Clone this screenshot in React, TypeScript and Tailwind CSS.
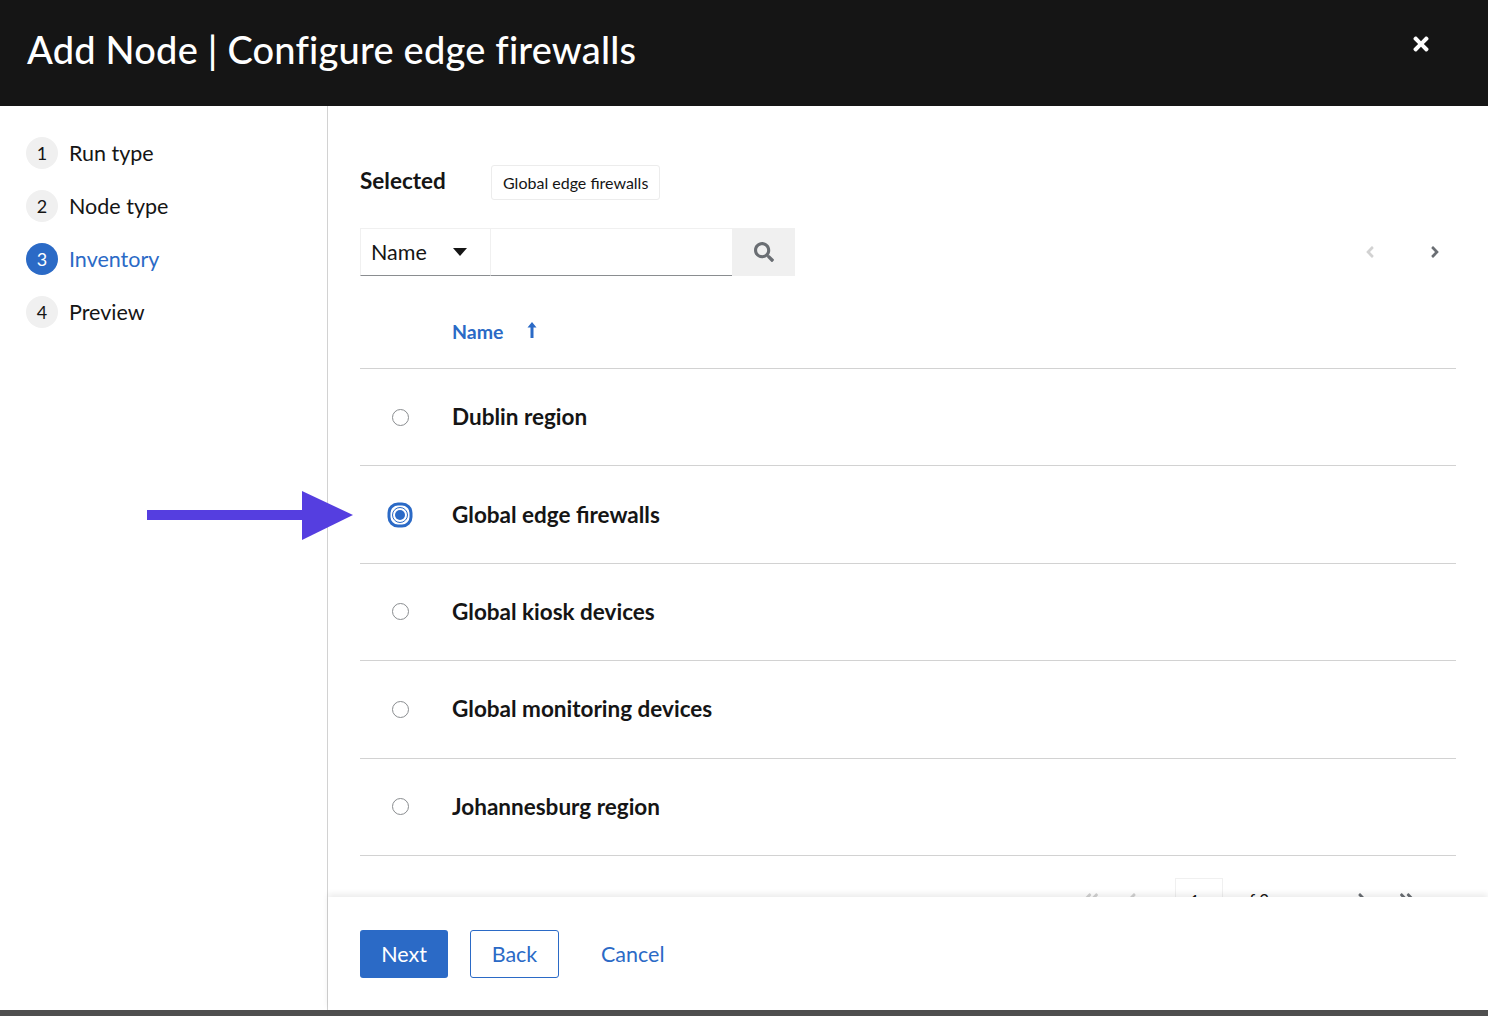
import { FaSearch, FaAngleLeft, FaAngleRight, FaAngleDoubleLeft, FaAngleDoubleRight, FaTimes } from "react-icons/fa";

const steps = [
  { n: 1, label: "Run type" },
  { n: 2, label: "Node type" },
  { n: 3, label: "Inventory", current: true },
  { n: 4, label: "Preview" },
];

const rows = [
  "Dublin region",
  "Global edge firewalls",
  "Global kiosk devices",
  "Global monitoring devices",
  "Johannesburg region",
];

function Radio({ checked }: { checked?: boolean }) {
  if (checked) {
    return (
      <svg width="26" height="26" viewBox="0 0 26 26">
        <rect x="2" y="2" width="22" height="22" rx="9" fill="none" stroke="#2b6ac6" strokeWidth="3" />
        <circle cx="13" cy="13" r="7.5" fill="#fff" stroke="#2b6ac6" strokeWidth="1" />
        <circle cx="13" cy="13" r="5" fill="#2b6ac6" />
      </svg>
    );
  }
  return <span className="block w-[17px] h-[17px] rounded-full border border-[#8a8d90] bg-white" />;
}

export default function App() {
  return (
    <div className="w-[1488px] h-[1016px] flex flex-col bg-white overflow-hidden font-['Lato','Liberation_Sans',sans-serif] text-[#151515]">
      <header className="h-[106px] shrink-0 bg-[#151515] flex items-center justify-between pl-[27px] pr-[56px]">
        <h1 className="text-white text-[38px] font-medium tracking-[0.2px] -mt-[8px]">
          Add Node | Configure edge firewalls
        </h1>
        <FaTimes className="text-white -mt-[18px]" size={22} />
      </header>

      <div className="flex flex-1 min-h-0">
        <nav className="w-[328px] shrink-0 border-r border-[#d2d2d2] pt-[31px] pl-[26px]">
          <ul className="flex flex-col gap-[21px]">
            {steps.map((s) => (
              <li key={s.n} className="flex items-center gap-[11px] h-[32px]">
                <span
                  className={`w-[32px] h-[32px] rounded-full flex items-center justify-center text-[18px] ${
                    s.current ? "bg-[#2b6ac6] text-white" : "bg-[#f0f0f0] text-[#151515]"
                  }`}
                >
                  {s.n}
                </span>
                <span className={`text-[21.5px] ${s.current ? "text-[#2b6ac6]" : "text-[#151515]"}`}>
                  {s.label}
                </span>
              </li>
            ))}
          </ul>
        </nav>

        <div className="flex-1 flex flex-col min-w-0">
          <main className="flex-1 min-h-0 overflow-hidden pt-[59px] pl-[32px] pr-[32px]">
            <div className="flex items-center h-[35px]">
              <span className="w-[131px] text-[22.5px] font-bold -mt-[4px]">Selected</span>
              <span className="h-[35px] px-[11px] flex items-center border border-[#ececec] rounded-[3px] text-[16px]">
                Global edge firewalls
              </span>
            </div>

            <div className="flex items-center justify-between mt-[28px]">
              <div className="flex h-[48px]">
                <div className="w-[130px] flex items-center justify-between pl-[10px] pr-[23px] border-t border-l border-[#f0f0f0] border-b border-b-[#8a8d90] text-[21.5px]">
                  Name
                  <svg width="14" height="8" viewBox="0 0 14 8">
                    <path d="M0 0h14L7 8z" fill="#151515" />
                  </svg>
                </div>
                <div className="w-[242px] border-t border-l border-[#f0f0f0] border-b border-b-[#8a8d90]" />
                <div className="w-[63px] bg-[#f0f0f0] flex items-center justify-center">
                  <FaSearch size={20} className="text-[#6a6e73]" />
                </div>
              </div>
              <div className="flex items-center gap-[47px] pr-[12px]">
                <FaAngleLeft size={18} className="text-[#d2d2d2]" />
                <FaAngleRight size={18} className="text-[#6a6e73]" />
              </div>
            </div>

            <div className="mt-[20px] h-[73px] flex items-center border-b border-[#d2d2d2] pl-[92px]">
              <span className="text-[19.5px] font-bold text-[#2b6ac6]">Name</span>
              <svg className="ml-[24px] -mt-[4px]" width="10" height="18" viewBox="0 0 10 18">
                <path d="M5 1 0.5 6.5h3V17h3V6.5h3z" fill="#2b6ac6" />
              </svg>
            </div>

            {rows.map((r, i) => (
              <div key={r} className="h-[97.4px] flex items-center border-b border-[#d2d2d2]">
                <div className="w-[80px] flex items-center justify-center">
                  <Radio checked={i === 1} />
                </div>
                <span className="ml-[12px] text-[22.5px] font-bold">{r}</span>
              </div>
            ))}

            <div className="mt-[22px] flex items-start justify-end pr-[40px] text-[17px]">
              <FaAngleDoubleLeft size={18} className="mt-[12px] text-[#d2d2d2]" />
              <FaAngleLeft size={18} className="mt-[12px] ml-[23px] text-[#d2d2d2]" />
              <div className="ml-[34px] w-[48px] h-[36px] border border-[#f0f0f0] pl-[14px] pt-[10px]">1</div>
              <span className="ml-[17px] pt-[10px]">of 2</span>
              <FaAngleRight size={18} className="mt-[12px] ml-[84px] text-[#6a6e73]" />
              <FaAngleDoubleRight size={18} className="mt-[12px] ml-[27px] text-[#6a6e73]" />
            </div>
          </main>

          <footer className="h-[113px] shrink-0 relative z-10 bg-white shadow-[0_-3px_6px_rgba(0,0,0,0.08)] flex items-start gap-[22px] pl-[32px] pt-[33px]">
            <button className="w-[88px] h-[48px] rounded-[3px] bg-[#2b6ac6] text-white text-[21.5px]">Next</button>
            <button className="w-[89px] h-[48px] rounded-[3px] border border-[#2b6ac6] text-[#2b6ac6] text-[21.5px]">
              Back
            </button>
            <button className="h-[48px] px-[20px] text-[#2b6ac6] text-[21.5px]">Cancel</button>
          </footer>
        </div>
      </div>

      <div className="h-[6px] shrink-0 bg-[#4f4f4f]" />

      <svg className="absolute left-[147px] top-[490px] pointer-events-none" width="208" height="52" viewBox="0 0 208 52">
        <rect x="0" y="20" width="160" height="10" fill="#553ee0" />
        <path d="M155 1 206 25 155 50z" fill="#553ee0" />
      </svg>
    </div>
  );
}
